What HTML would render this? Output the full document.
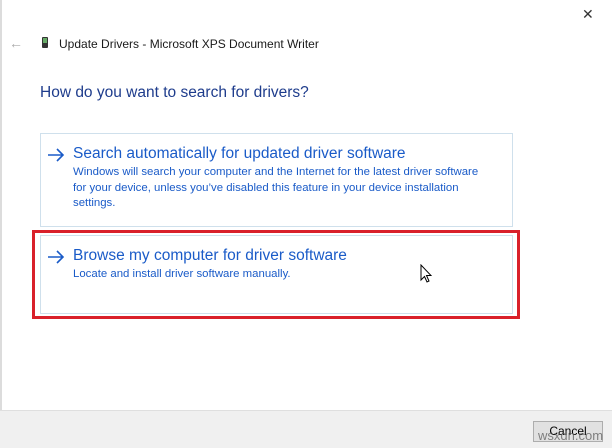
<!DOCTYPE html>
<html><head><style>
body{margin:0;width:612px;height:447px;background:#fff;position:relative;overflow:hidden;font-family:"Liberation Sans",sans-serif;}
.a{position:absolute;white-space:nowrap;}
.t{color:#1a1a1a;font-size:12px;}
.h{color:#1e3c8c;font-size:15.5px;}
.box{position:absolute;border:1px solid #cfe0ec;}
.ti{color:#1a5bc8;font-size:15.5px;}
.ds{color:#1a5bc8;font-size:11.4px;line-height:15.5px;}
</style></head><body>
<div class="a" style="left:0;top:0;width:2px;height:447px;background:#dcdcdc"></div>
<div class="a" style="left:582px;top:6px;font-size:14px;color:#333">✕</div>
<div class="a" style="left:9px;top:35px;color:#aaa;font-size:14px">←</div>
<div class="a" style="left:42px;top:37px;width:6px;height:11px;background:#333;border-radius:1px"></div>
<div class="a" style="left:43px;top:38px;width:4px;height:5px;background:#6a6"></div>
<div class="a t" style="left:59px;top:37px">Update Drivers - Microsoft XPS Document Writer</div>
<div class="a h" style="left:40px;top:84px">How do you want to search for drivers?</div>
<div class="box" style="left:40px;top:133px;width:471px;height:92px"></div>
<svg class="a" style="left:47px;top:148px" width="18" height="14" viewBox="0 0 18 14"><path d="M1 7 H16 M10 1 L16 7 L10 13" fill="none" stroke="#1a5bc8" stroke-width="1.6"/></svg>
<div class="a ti" style="left:73px;top:145px">Search automatically for updated driver software</div>
<div class="a ds" style="left:73px;top:165px">Windows will search your computer and the Internet for the latest driver software<br>for your device, unless you’ve disabled this feature in your device installation<br>settings.</div>
<div class="a" style="left:32px;top:230px;width:482px;height:83px;border:3px solid #d9202a"></div>
<div class="box" style="left:40px;top:235px;width:471px;height:77px"></div>
<svg class="a" style="left:47px;top:250px" width="18" height="14" viewBox="0 0 18 14"><path d="M1 7 H16 M10 1 L16 7 L10 13" fill="none" stroke="#1a5bc8" stroke-width="1.6"/></svg>
<div class="a ti" style="left:73px;top:247px">Browse my computer for driver software</div>
<div class="a ds" style="left:73px;top:267px">Locate and install driver software manually.</div>
<svg class="a" style="left:420px;top:264px" width="12" height="20" viewBox="0 0 12 20"><path d="M1 1 L1 16 L4.5 12.5 L7 18 L9 17 L6.5 11.5 L11 11.5 Z" fill="#fff" stroke="#000" stroke-width="1"/></svg>
<div class="a" style="left:0;top:410px;width:612px;height:37px;background:#f0f0f0;border-top:1px solid #dfdfdf"></div>
<div class="a" style="left:533px;top:421px;width:68px;height:19px;background:#e1e1e1;border:1px solid #adadad;font-size:12px;text-align:center;line-height:19px;color:#000">Cancel</div>
<div class="a" style="left:538px;top:428px;font-size:13px;color:#555;opacity:.7">wsxdn.com</div>
</body></html>
